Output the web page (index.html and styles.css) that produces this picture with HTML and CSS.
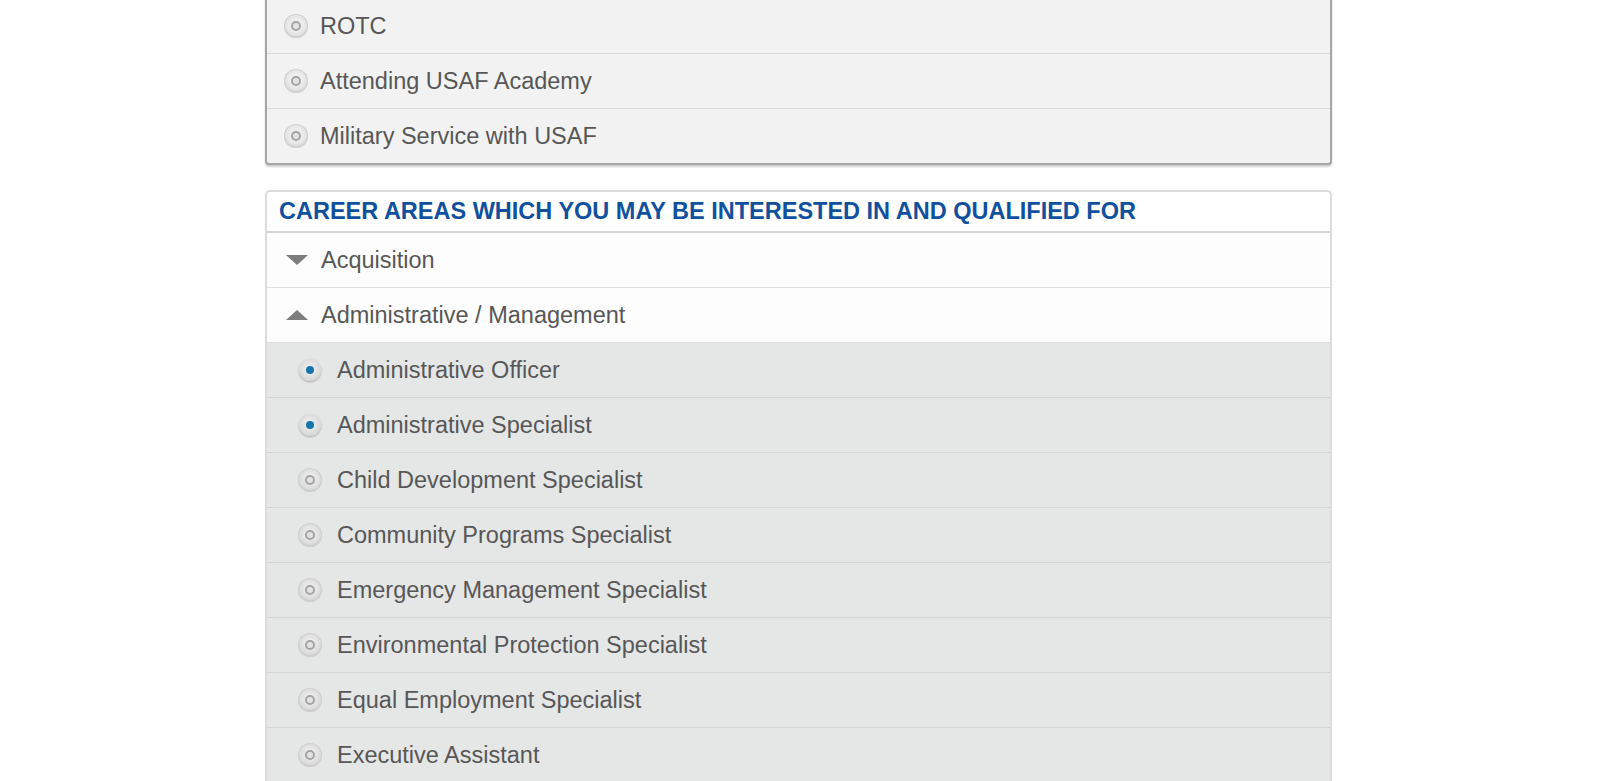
FILE: index.html
```html
<!DOCTYPE html>
<html>
<head>
<meta charset="utf-8">
<link rel="stylesheet" href="styles.css">
</head>
<body>
<div class="page">
  <div class="panel panel-top">
    <div class="row"><span class="radio"><span class="ring"></span></span><span class="label">ROTC</span></div>
    <div class="row"><span class="radio"><span class="ring"></span></span><span class="label">Attending USAF Academy</span></div>
    <div class="row"><span class="radio"><span class="ring"></span></span><span class="label">Military Service with USAF</span></div>
  </div>

  <div class="panel panel-career">
    <div class="panel-head">CAREER AREAS WHICH YOU MAY BE INTERESTED IN AND QUALIFIED FOR</div>
    <div class="row cat"><span class="tri tri-down"></span><span class="label">Acquisition</span></div>
    <div class="row cat"><span class="tri tri-up"></span><span class="label">Administrative / Management</span></div>
    <div class="sub">
      <div class="row subrow"><span class="radio on"><span class="dot"></span></span><span class="label">Administrative Officer</span></div>
      <div class="row subrow"><span class="radio on"><span class="dot"></span></span><span class="label">Administrative Specialist</span></div>
      <div class="row subrow"><span class="radio"><span class="ring"></span></span><span class="label">Child Development Specialist</span></div>
      <div class="row subrow"><span class="radio"><span class="ring"></span></span><span class="label">Community Programs Specialist</span></div>
      <div class="row subrow"><span class="radio"><span class="ring"></span></span><span class="label">Emergency Management Specialist</span></div>
      <div class="row subrow"><span class="radio"><span class="ring"></span></span><span class="label">Environmental Protection Specialist</span></div>
      <div class="row subrow"><span class="radio"><span class="ring"></span></span><span class="label">Equal Employment Specialist</span></div>
      <div class="row subrow"><span class="radio"><span class="ring"></span></span><span class="label">Executive Assistant</span></div>
    </div>
  </div>
</div>
</body>
</html>
```

FILE: styles.css
```css
html, body {
  margin: 0;
  padding: 0;
  background: #ffffff;
  overflow: hidden;
}
body {
  font-family: "Liberation Sans", Arial, sans-serif;
  color: #575757;
}
.page {
  width: 1067px;
  margin: -2px 0 0 265px;
}
.panel-top {
  background: #f2f2f2;
  border: 2px solid #a6a6a6;
  border-top-width: 1px;
  border-radius: 0 0 4px 4px;
  box-shadow: 0 2px 2px rgba(0,0,0,0.2);
}
.row {
  height: 54px;
  display: flex;
  align-items: center;
  border-bottom: 1px solid #d9d9d9;
  font-size: 23.5px;
  line-height: 1;
}
.panel-top .row {
  padding-left: 17px;
}
.panel-top .row:last-child {
  border-bottom: none;
}
.label {
  margin-left: 12px;
  padding-top: 2px;
  white-space: nowrap;
}
.radio {
  width: 24px;
  height: 24px;
  border-radius: 50%;
  background: radial-gradient(circle at 50% 45%, #f6f6f6 0%, #e9e9e9 45%, #cdcdcd 100%);
  box-shadow: inset 0 0 0 1px #d0d0d0, inset 0 -2px 2px rgba(0,0,0,0.06);
  display: flex;
  align-items: center;
  justify-content: center;
  flex-shrink: 0;
}
.ring {
  width: 10px;
  height: 10px;
  border-radius: 50%;
  border: 2px solid #a3a3a3;
  background: radial-gradient(circle, #dcdcdc 0%, #eeeeee 100%);
  box-sizing: border-box;
}
.radio.on {
  width: 22px;
  height: 22px;
  margin: 0 1px;
  background: radial-gradient(circle at 50% 35%, #ffffff 0%, #fbfbfb 55%, #e8e8e8 100%);
  box-shadow: 0 1px 2px rgba(0,0,0,0.28);
}
.dot {
  width: 8px;
  height: 8px;
  border-radius: 50%;
  background: #1574aa;
}
.panel-career {
  margin-top: 25px;
  border: 2px solid #dcdcdc;
  border-bottom: none;
  border-radius: 5px 5px 0 0;
  background: #fdfdfd;
}
.panel-head {
  height: 39px;
  padding-left: 12px;
  display: flex;
  align-items: center;
  font-size: 23.5px;
  font-weight: bold;
  color: #0f519e;
  background: #ffffff;
  border-bottom: 2px solid #d4d4d4;
  border-radius: 4px 4px 0 0;
}
.cat {
  padding-left: 18px;
  background: #fdfdfd;
  border-bottom-color: #dedede;
}
.tri {
  width: 24px;
  display: flex;
  justify-content: center;
}
.tri::before {
  content: "";
  width: 0;
  height: 0;
  border-left: 11px solid transparent;
  border-right: 11px solid transparent;
}
.tri-down::before {
  border-top: 10px solid #7d7d7d;
}
.tri-up::before {
  border-bottom: 10px solid #7d7d7d;
}
.sub {
  background: #e5e6e6;
}
.subrow {
  padding-left: 31px;
  border-bottom: 1px solid #d2d3d3;
}
.subrow .label {
  margin-left: 15px;
}
.subrow .radio {
  background: radial-gradient(circle at 50% 45%, #f2f2f2 0%, #e2e2e2 45%, #c8c8c8 100%);
}
```
